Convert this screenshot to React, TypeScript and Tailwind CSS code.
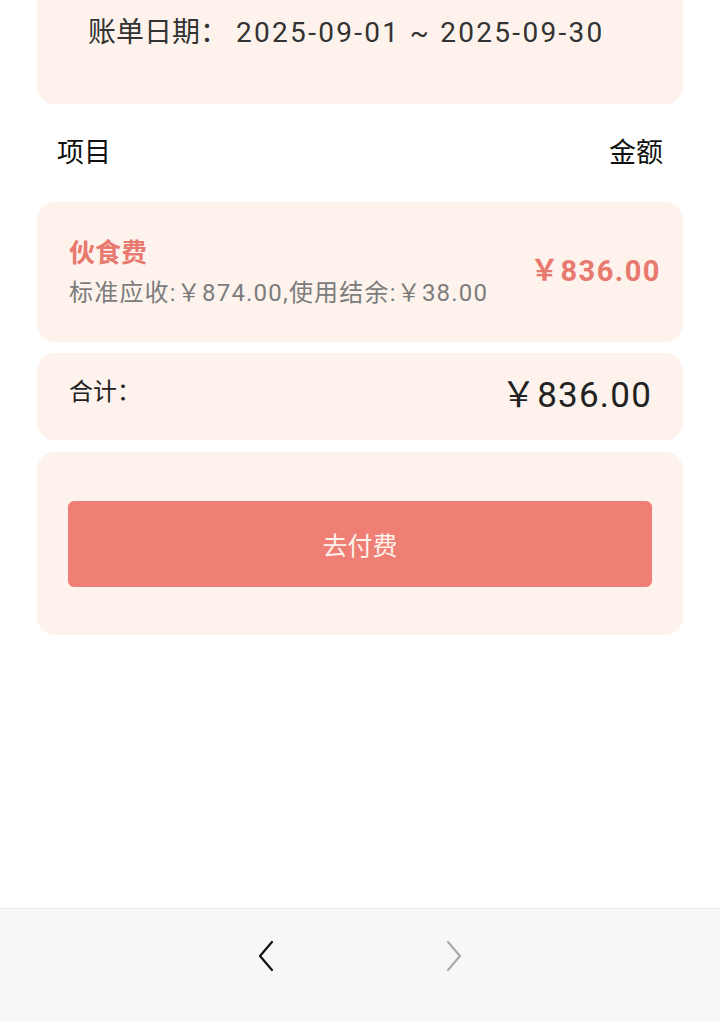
const FONT = "font-['Roboto','Noto_Sans_CJK_SC',sans-serif]";

function ChevronLeft({ className }: { className?: string }) {
  return (
    <svg viewBox="0 0 18 32" className={className} fill="none" stroke="currentColor" strokeWidth={2.2} strokeLinecap="round" strokeLinejoin="round">
      <path d="M15 2 L3 16 L15 30" />
    </svg>
  );
}

function ChevronRight({ className }: { className?: string }) {
  return (
    <svg viewBox="0 0 18 32" className={className} fill="none" stroke="currentColor" strokeWidth={2.2} strokeLinecap="round" strokeLinejoin="round">
      <path d="M3 2 L15 16 L3 30" />
    </svg>
  );
}

export default function App() {
  return (
    <div className={`min-h-[1022px] flex flex-col bg-white ${FONT}`}>
      <div className="mx-[37px] flex flex-col">
        {/* bill period */}
        <div className="h-[104px] rounded-b-[18px] bg-[#fdf3ec] pl-[51px] pt-[13px] text-[28px] leading-[40px] text-[#333]">
          <span>账单日期：</span>
          <span className="ml-[8px] tracking-[2.3px]">2025-09-01 ~ 2025-09-30</span>
        </div>

        {/* header */}
        <div className="h-[98px] flex items-center justify-between px-[20px] text-[27px] text-[#111]">
          <span>项目</span>
          <span>金额</span>
        </div>

        {/* item */}
        <div className="h-[140px] rounded-[18px] bg-[#fdf3ec] flex items-center justify-between pl-[32px] pr-[22px]">
          <div className="flex flex-col">
            <span className="text-[26px] leading-[36px] font-bold text-[#e8796f]">伙食费</span>
            <span className="mt-[6px] text-[24px] leading-[32px] tracking-[1.2px] text-[#7c7c7c]">标准应收:￥874.00,使用结余:￥38.00</span>
          </div>
          <span className="text-[29px] font-bold tracking-[1.5px] text-[#e8796f]">￥836.00</span>
        </div>

        {/* total */}
        <div className="mt-[11px] h-[87px] rounded-[18px] bg-[#fdf3ec] flex items-center justify-between pl-[32px] pr-[31px]">
          <span className="-mt-[10px] text-[24px] text-[#222]">合计：</span>
          <span className="text-[35px] tracking-[1.2px] text-[#222]">￥836.00</span>
        </div>

        {/* pay */}
        <div className="mt-[12px] rounded-[18px] bg-[#fdf3ec] px-[31px] pt-[49px] pb-[48px]">
          <button className="w-full h-[86px] rounded-[6px] bg-[#ef7f75] text-[#fdf3ec] text-[25px] pt-[5px] flex items-center justify-center">
            去付费
          </button>
        </div>
      </div>

      {/* browser nav bar */}
      <div className="mt-auto h-[114px] border-t border-[#ececec] bg-[#f7f7f7] flex justify-center gap-[170px] pt-[31px]">
        <ChevronLeft className="w-[18px] h-[32px] text-[#111]" />
        <ChevronRight className="w-[18px] h-[32px] text-[#aaa]" />
      </div>
    </div>
  );
}
